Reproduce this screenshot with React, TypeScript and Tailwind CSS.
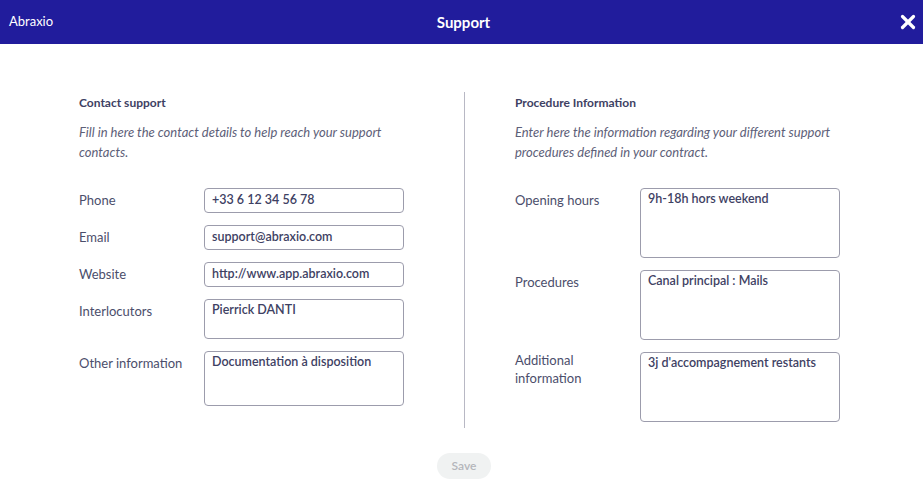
import { X } from 'lucide-react'

const contactFields = [
  { label: 'Phone', value: '+33 6 12 34 56 78', h: 'h-[25px]', multi: false },
  { label: 'Email', value: 'support@abraxio.com', h: 'h-[25px]', multi: false },
  { label: 'Website', value: 'http://www.app.abraxio.com', h: 'h-[25px]', multi: false },
  { label: 'Interlocutors', value: 'Pierrick DANTI', h: 'h-[40px]', multi: true },
  { label: 'Other information', value: 'Documentation à disposition', h: 'h-[55px]', multi: true },
]

const procedureFields = [
  { label: 'Opening hours', value: '9h-18h hors weekend', twoLines: false },
  { label: 'Procedures', value: 'Canal principal : Mails', twoLines: false },
  { label: 'Additional information', value: "3j d'accompagnement restants", twoLines: true },
]

function FieldBox({ value, h, multi }: { value: string; h: string; multi: boolean }) {
  return (
    <div
      className={`w-[200px] ${h} shrink-0 rounded-[4px] border border-[#9c9cac] px-[7px] text-[12.5px] font-semibold text-[#3e4163] ${
        multi ? 'pt-[1px] leading-[18px]' : 'flex items-center'
      }`}
    >
      {value}
    </div>
  )
}

export default function App() {
  return (
    <div className="w-[923px] h-[488px] bg-white font-['Lato','Noto_Sans',sans-serif] text-[#4b4e6b]">
      {/* Header */}
      <div className="relative flex h-[44px] items-center justify-center bg-[#211c9c] pl-[4px] text-white">
        <span className="absolute left-[9px] text-[13px]">Abraxio</span>
        <span className="text-[15px] font-bold">Support</span>
        <X className="absolute right-[4px] h-[22px] w-[22px]" strokeWidth={3.5} />
      </div>

      {/* Body */}
      <div className="flex pl-[79px] pt-[50px]">
        <div className="w-[385px] shrink-0">
          <h2 className="text-[12px] font-bold leading-[18px] text-[#3e4163]">Contact support</h2>
          <p className="mt-[10px] w-[312px] text-[13px] italic leading-[20px] text-[#5d6078]">
            Fill in here the contact details to help reach your support contacts.
          </p>
          <div className="mt-[26px] flex flex-col gap-[12px]">
            {contactFields.map((f) => (
              <div key={f.label} className="flex items-start">
                <span className="w-[125px] pt-[3px] text-[13px] leading-[18px]">{f.label}</span>
                <FieldBox value={f.value} h={f.h} multi={f.multi} />
              </div>
            ))}
          </div>
        </div>

        <div className="mt-[-2px] h-[336px] w-px shrink-0 bg-[#b8b8c4]" />

        <div className="w-[408px] shrink-0 pl-[50px]">
          <h2 className="text-[12px] font-bold leading-[18px] text-[#3e4163]">Procedure Information</h2>
          <p className="mt-[10px] w-[330px] text-[13px] italic leading-[20px] text-[#5d6078]">
            Enter here the information regarding your different support procedures defined in your contract.
          </p>
          <div className="mt-[26px] flex flex-col gap-[12px]">
            {procedureFields.map((f) => (
              <div key={f.label} className="flex items-start">
                <span
                  className={`w-[125px] pr-[20px] text-[13px] leading-[18px] ${
                    f.twoLines ? 'mt-[-1px]' : 'pt-[3px]'
                  }`}
                >
                  {f.label}
                </span>
                <FieldBox value={f.value} h="h-[70px]" multi />
              </div>
            ))}
          </div>
        </div>
      </div>

      {/* Footer */}
      <div className="mt-[25px] flex justify-center pl-[5px]">
        <button className="h-[26px] rounded-full bg-[#f0f2f2] px-[15px] text-[12px] font-semibold text-[#b4b6bb]">
          Save
        </button>
      </div>
    </div>
  )
}
